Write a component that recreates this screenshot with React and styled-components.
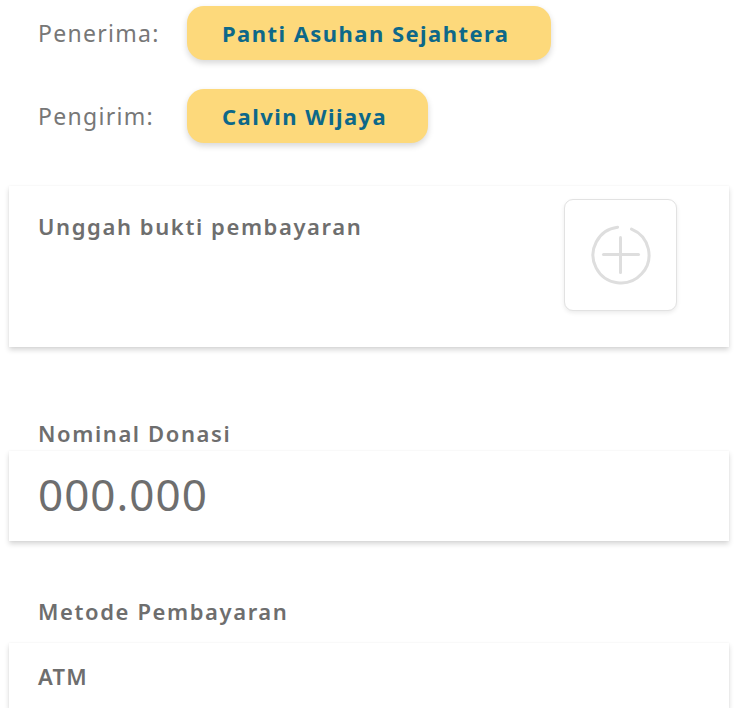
import React from "react";
import styled, { createGlobalStyle } from "styled-components";

const GlobalStyle = createGlobalStyle`
    html, body {
        margin: 0;
        padding: 0;
        background: #ffffff;
    }
    body {
        font-family: "Noto Sans", "Open Sans", sans-serif;
    }
    * {
        box-sizing: border-box;
    }
`;

const Page = styled.div`
    width: 738px;
    padding: 6px 9px 0;
`;

const PartyRow = styled.div`
    display: flex;
    align-items: center;
    padding-left: 29px;
    margin-bottom: ${(p) => p.gap || 0}px;
`;

const PartyLabel = styled.span`
    width: 149px;
    font-size: 23px;
    letter-spacing: 1.3px;
    color: #777777;
`;

const NamePill = styled.div`
    height: 54px;
    padding: 0 41px 0 35px;
    display: flex;
    align-items: center;
    background: #fdd97b;
    border-radius: 17px;
    box-shadow: 0 3px 6px rgba(0, 0, 0, 0.16);
    font-size: 22px;
    font-weight: 700;
    letter-spacing: 1.45px;
    color: #0d6889;
`;

const Card = styled.div`
    background: #ffffff;
    box-shadow: 0 3px 5px rgba(0, 0, 0, 0.16), 0 0 2px rgba(0, 0, 0, 0.04);
    padding: 0 29px;
    height: ${(p) => p.h}px;
    display: flex;
    align-items: ${(p) => p.align || "center"};
    justify-content: space-between;
`;

const SectionTitle = styled.div`
    font-size: 22px;
    font-weight: 600;
    letter-spacing: 1.6px;
    color: #6e6e6e;
    padding-left: 29px;
    margin: ${(p) => p.m || "0"};
`;

const CardTitle = styled.div`
    font-size: 22px;
    font-weight: 600;
    letter-spacing: 1.6px;
    color: #6e6e6e;
    margin-top: 25px;
`;

const UploadBox = styled.button`
    width: 113px;
    height: 112px;
    margin-top: 13px;
    margin-right: 23px;
    border: 1px solid #e2e2e2;
    border-radius: 9px;
    background: #ffffff;
    box-shadow: 0 2px 4px rgba(0, 0, 0, 0.08);
    display: flex;
    align-items: center;
    justify-content: center;
    padding: 0;
    cursor: pointer;
`;

const AmountText = styled.div`
    font-size: 44px;
    letter-spacing: 1px;
    color: #6e6e6e;
    margin-top: -4px;
`;

const MethodText = styled.div`
    font-size: 22px;
    font-weight: 600;
    letter-spacing: 1.3px;
    color: #6e6e6e;
`;

function PlusCircle() {
    // ring with a short break at the top, right of the vertical bar
    const r = 28;
    const cx = 32;
    const cy = 32;
    const a1 = (-97 * Math.PI) / 180;
    const a2 = (-68 * Math.PI) / 180;
    const x1 = cx + r * Math.cos(a1);
    const y1 = cy + r * Math.sin(a1);
    const x2 = cx + r * Math.cos(a2);
    const y2 = cy + r * Math.sin(a2);
    return (
        <svg width="64" height="64" viewBox="0 0 64 64" fill="none">
            <path
                d={`M ${x2} ${y2} A ${r} ${r} 0 1 1 ${x1} ${y1}`}
                stroke="#dedede"
                strokeWidth="3"
                strokeLinecap="round"
            />
            <line x1="31.5" y1="14.5" x2="31.5" y2="49.5" stroke="#dedede" strokeWidth="3" strokeLinecap="round" />
            <line x1="14.5" y1="31.5" x2="49.5" y2="31.5" stroke="#dedede" strokeWidth="3" strokeLinecap="round" />
        </svg>
    );
}

export default function App() {
    return (
        <Page>
            <GlobalStyle />
            <PartyRow gap={29}>
                <PartyLabel>Penerima:</PartyLabel>
                <NamePill>Panti Asuhan Sejahtera</NamePill>
            </PartyRow>
            <PartyRow gap={43}>
                <PartyLabel>Pengirim:</PartyLabel>
                <NamePill>Calvin Wijaya</NamePill>
            </PartyRow>

            <Card h={161} align="flex-start">
                <CardTitle>Unggah bukti pembayaran</CardTitle>
                <UploadBox aria-label="Unggah">
                    <PlusCircle />
                </UploadBox>
            </Card>

            <SectionTitle m="71px 0 3px">Nominal Donasi</SectionTitle>
            <Card h={90}>
                <AmountText>000.000</AmountText>
            </Card>

            <SectionTitle m="55px 0 17px">Metode Pembayaran</SectionTitle>
            <Card h={65}>
                <MethodText>ATM</MethodText>
            </Card>
        </Page>
    );
}
